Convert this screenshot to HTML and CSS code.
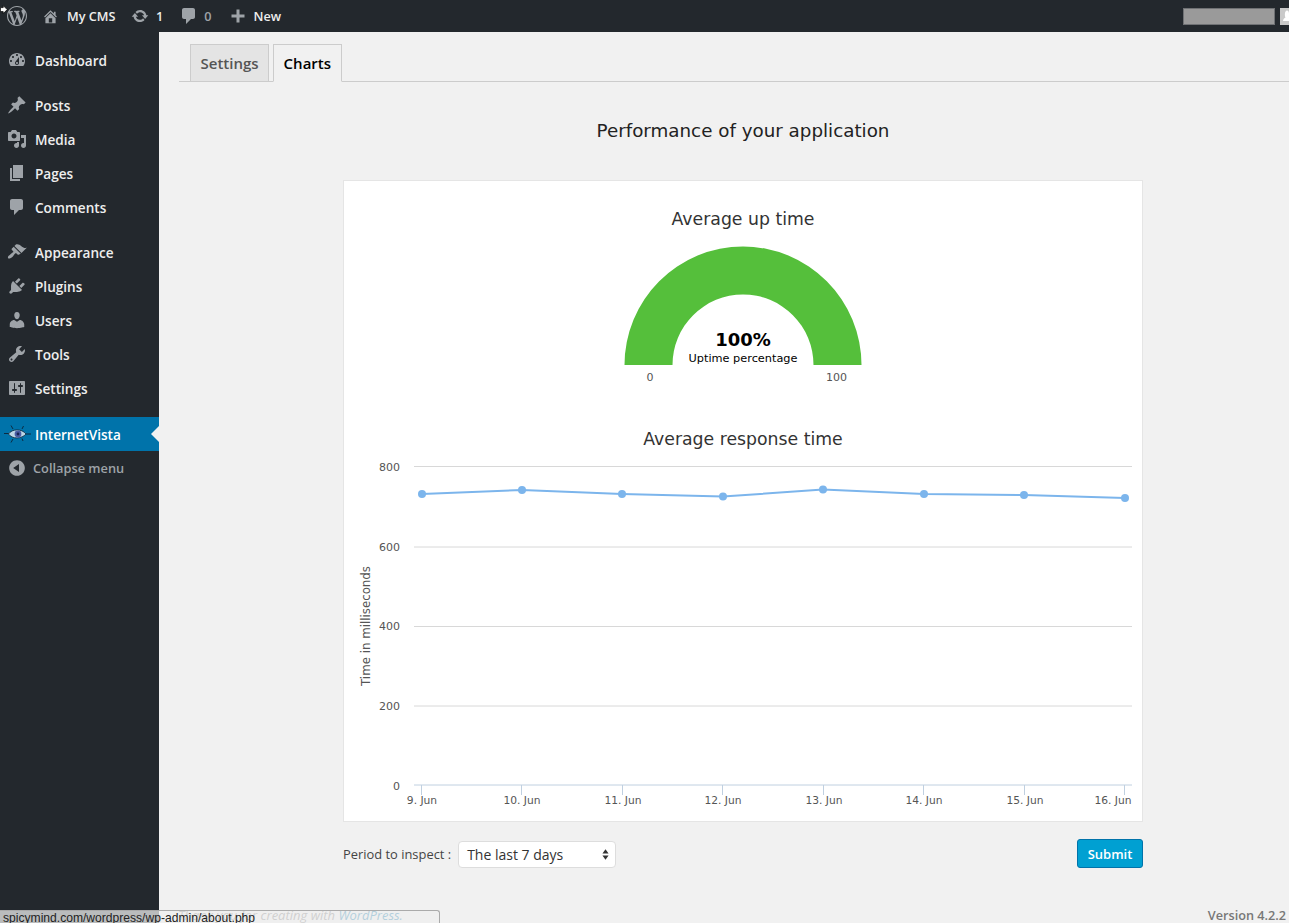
FILE: index.html
```html
<!DOCTYPE html>
<html lang="en">

<head>
    <meta charset="UTF-8">
    <meta name="viewport" content="width=device-width, initial-scale=1.0">
    <title>InternetVista ‹ My CMS</title>
    <link rel="stylesheet" href="styles.css">
</head>

<body>
    <header class="admin-bar">
        <svg class="bar-logo" viewBox="0 0 20 20"><path d="M20 10c0-5.51-4.49-10-10-10C4.48 0 0 4.49 0 10c0 5.52 4.48 10 10 10 5.51 0 10-4.48 10-10zM7.78 15.37L4.37 6.22c.55-.02 1.17-.08 1.17-.08.5-.06.44-1.13-.06-1.11 0 0-1.45.11-2.37.11-.18 0-.37 0-.58-.01C4.12 2.69 6.87 1.11 10 1.11c2.33 0 4.45.87 6.05 2.34-.68-.11-1.65.39-1.65 1.58 0 .74.45 1.36.9 2.1.35.61.55 1.36.55 2.46 0 1.49-1.4 5-1.4 5l-3.03-8.37c.54-.02.82-.17.82-.17.5-.05.44-1.25-.06-1.22 0 0-1.44.12-2.38.12-.87 0-2.33-.12-2.33-.12-.5-.03-.56 1.2-.06 1.22l.92.08 1.26 3.41zM17.41 10c.24-.64.74-1.87.43-4.25.7 1.29 1.05 2.71 1.05 4.25 0 3.29-1.73 6.24-4.4 7.78.97-2.59 1.94-5.2 2.92-7.78zM6.1 18.09C3.12 16.65 1.11 13.53 1.11 10c0-1.3.23-2.48.72-3.59C3.25 10.3 4.67 14.2 6.1 18.09zm4.03-6.63l2.58 6.98c-.86.29-1.76.45-2.71.45-.79 0-1.57-.11-2.29-.33.81-2.38 1.62-4.74 2.42-7.1z"/></svg>
        <a class="bar-item bar-home">
            <svg viewBox="0 0 20 20"><path d="M16 8.5l1.53 1.53-1.06 1.06L10 4.62l-6.47 6.47-1.06-1.06L10 2.5l4 4v-2h2v4zm-6-2.46l6 5.99V18H4v-5.97zM12 17v-5H8v5h4z"/></svg>
            My CMS
        </a>
        <a class="bar-item bar-updates">
            <svg viewBox="0 0 20 20"><path d="M10.2 3.28c3.53 0 6.43 2.61 6.92 6h2.08l-3.5 4-3.5-4h2.32c-.45-1.97-2.21-3.45-4.32-3.45-1.45 0-2.73.71-3.54 1.78L4.95 5.66C6.23 4.2 8.11 3.28 10.2 3.28zm-.4 13.44c-3.52 0-6.43-2.61-6.92-6H.8l3.5-4c1.17 1.33 2.33 2.67 3.5 4H5.48c.45 1.97 2.21 3.45 4.32 3.45 1.45 0 2.73-.71 3.54-1.78l1.71 1.95c-1.28 1.46-3.15 2.38-5.25 2.38z"/></svg>
            1
        </a>
        <a class="bar-item bar-comments">
            <svg viewBox="0 0 20 20"><path d="M5 2h9c1.1 0 2 .9 2 2v7c0 1.1-.9 2-2 2h-2l-5 5v-5H5c-1.1 0-2-.9-2-2V4c0-1.1.9-2 2-2z"/></svg>
            0
        </a>
        <a class="bar-item bar-new">
            <svg viewBox="0 0 20 20"><path d="M8.5 3.500h3v5h5v3h-5v5h-3v-5h-5v-3h5z"/></svg>
            New
        </a>
        <div class="bar-user">
            <span class="user-name"></span>
            <svg class="user-avatar" viewBox="0 0 9 17">
                <rect width="9" height="17" fill="#c9c9c9"/>
                <path d="M7 2.500c2 0 2 3 2 3v5c0 1.500 0 2.500 0 2.500H3c0-2 1.500-3 2.500-3.500C4.500 8 4.500 2.500 7 2.500z" fill="#fff"/>
            </svg>
        </div>
    </header>

    <div class="wrap">
        <nav class="side-menu">
            <ul class="menu-group">
                <li>
                    <svg viewBox="0 0 20 20"><path d="M3.76 16h12.48c1.1-1.37 1.76-3.11 1.76-5 0-4.42-3.58-8-8-8s-8 3.58-8 8c0 1.89.66 3.63 1.76 5zM10 4c.55 0 1 .45 1 1s-.45 1-1 1-1-.45-1-1 .45-1 1-1zM6 6c.55 0 1 .45 1 1s-.45 1-1 1-1-.45-1-1 .45-1 1-1zm8 0c.55 0 1 .45 1 1s-.45 1-1 1-1-.45-1-1 .45-1 1-1zm-5.37 5.55L12 7v6c0 1.1-.9 2-2 2s-2-.9-2-2c0-.57.24-1.08.63-1.45zM4 10c.55 0 1 .45 1 1s-.45 1-1 1-1-.45-1-1 .45-1 1-1zm12 0c.55 0 1 .45 1 1s-.45 1-1 1-1-.45-1-1 .45-1 1-1zm-5 3c0-.55-.45-1-1-1s-1 .45-1 1 .45 1 1 1 1-.45 1-1z" fill-rule="evenodd"/></svg>
                    Dashboard
                </li>
            </ul>
            <ul class="menu-group">
                <li>
                    <svg viewBox="0 0 20 20"><path d="M10.44 3.02l1.82-1.82 6.36 6.35-1.83 1.82c-1.05-.68-2.48-.57-3.41.36l-.75.75c-.92.93-1.04 2.35-.35 3.41l-1.83 1.82-2.41-2.41-2.8 2.79c-.42.42-3.38 2.71-3.8 2.29s1.86-3.39 2.28-3.81l2.79-2.79L4.1 9.36l1.83-1.82c1.05.69 2.48.57 3.4-.36l.75-.75c.93-.92 1.05-2.35.36-3.41z"/></svg>
                    Posts
                </li>
                <li>
                    <svg viewBox="0 0 20 20"><path d="M13 11V4c0-.55-.45-1-1-1h-1.67L9 1H5L3.67 3H2c-.55 0-1 .45-1 1v7c0 .55.45 1 1 1h10c.55 0 1-.45 1-1zM7 4.5c1.38 0 2.5 1.12 2.5 2.5S8.38 9.5 7 9.5 4.5 8.38 4.5 7 5.62 4.5 7 4.5zM14 6h5v10.5c0 1.38-1.12 2.5-2.5 2.5S14 17.88 14 16.5s1.12-2.5 2.5-2.5c.17 0 .34.02.5.05V9h-3V6zm-4 8.05V13h2v3.5c0 1.38-1.12 2.5-2.5 2.5S7 17.88 7 16.5 8.12 14 9.5 14c.17 0 .34.02.5.05z"/></svg>
                    Media
                </li>
                <li>
                    <svg viewBox="0 0 20 20"><path d="M6 15V2h10v13H6zm-1 1h8v2H3V5h2v11z"/></svg>
                    Pages
                </li>
                <li>
                    <svg viewBox="0 0 20 20"><path d="M5 2h9c1.1 0 2 .9 2 2v7c0 1.1-.9 2-2 2h-2l-5 5v-5H5c-1.1 0-2-.9-2-2V4c0-1.1.9-2 2-2z"/></svg>
                    Comments
                </li>
            </ul>
            <ul class="menu-group">
                <li>
                    <svg viewBox="0 0 20 20"><path d="M14.48 11.06L7.41 3.99l1.5-1.5c.5-.56 2.3-.47 3.51.32 1.21.8 1.43 1.28 2.91 2.1 1.18.64 2.45 1.26 4.45.85zm-.71.71L6.7 4.7 4.93 6.47c-.39.39-.39 1.02 0 1.41l1.06 1.06c.39.39.39 1.03 0 1.42-.6.6-1.43 1.11-2.21 1.69-.35.26-.7.53-1.01.84C1.43 13.23.4 15.5 1.19 16.28c.79.79 3.05-.25 4.39-1.58.31-.31.58-.66.84-1.01.58-.78 1.09-1.61 1.69-2.21.39-.39 1.02-.39 1.41 0l1.06 1.06c.39.39 1.02.39 1.41 0z"/></svg>
                    Appearance
                </li>
                <li>
                    <svg viewBox="0 0 20 20"><path d="M13.11 4.36L9.87 7.6 8 5.73l3.24-3.24c.35-.34 1.05-.2 1.56.32.52.51.66 1.21.31 1.55zm-8 1.77l.91-1.12 9.01 9.01-1.19.84c-.71.71-2.63 1.16-3.82 1.16H6.14L4.9 17.26c-.59.59-1.54.59-2.12 0-.59-.58-.59-1.53 0-2.12l1.24-1.24v-3.88c0-1.13.4-3.19 1.09-3.89zm7.26 3.97l3.24-3.24c.34-.35 1.04-.21 1.55.31.52.51.66 1.21.31 1.55l-3.24 3.25z"/></svg>
                    Plugins
                </li>
                <li>
                    <svg viewBox="0 0 20 20"><path d="M10 9.25c-2.27 0-2.73-3.44-2.73-3.44C7 4.02 7.82 2 9.97 2c2.16 0 2.98 2.02 2.71 3.81 0 0-.41 3.44-2.68 3.44zm0 2.57L12.72 10c2.39 0 4.52 2.33 4.52 4.53v2.49s-3.65 1.13-7.24 1.13c-3.65 0-7.24-1.13-7.24-1.13v-2.49c0-2.25 1.94-4.48 4.47-4.48z"/></svg>
                    Users
                </li>
                <li>
                    <svg viewBox="0 0 20 20"><path d="M16.68 9.77c-1.34 1.34-3.3 1.67-4.95.99l-5.41 6.52c-.99.99-2.59.99-3.58 0s-.99-2.59 0-3.57l6.52-5.42c-.68-1.65-.35-3.61.99-4.95 1.28-1.28 3.12-1.62 4.72-1.06l-2.89 2.89 2.82 2.82 2.86-2.87c.53 1.58.18 3.39-1.08 4.65zM3.81 16.21c.4.39 1.04.39 1.43 0 .4-.4.4-1.04 0-1.43-.39-.4-1.03-.4-1.43 0-.39.39-.39 1.03 0 1.43z"/></svg>
                    Tools
                </li>
                <li>
                    <svg viewBox="0 0 20 20"><path d="M18 16V4c0-.55-.45-1-1-1H3c-.55 0-1 .45-1 1v12c0 .55.45 1 1 1h14c.55 0 1-.45 1-1zM8 11h1c.55 0 1 .45 1 1s-.45 1-1 1H8v1.5c0 .28-.22.5-.5.5s-.5-.22-.5-.5V13H6c-.55 0-1-.45-1-1s.45-1 1-1h1V5.5c0-.28.22-.5.5-.5s.5.22.5.5V11zm5-2h-1c-.55 0-1-.45-1-1s.45-1 1-1h1V5.5c0-.28.22-.5.5-.5s.5.22.5.5V7h1c.55 0 1 .45 1 1s-.45 1-1 1h-1v5.5c0 .28-.22.5-.5.5s-.5-.22-.5-.5V9z"/></svg>
                    Settings
                </li>
            </ul>
            <ul class="menu-group">
                <li class="current">
                    <svg class="eye-icon" viewBox="0 0 28 20">
                        <path d="M1 9.500h5M23 10h5M10 5L8 1.500M19 5L20.500 2M10 15L8 18.500M19 14.500L20 17" fill="none" stroke="#0e2236" stroke-width=".9"/>
                        <path d="M5.500 10C9 4.500 19 4.500 23 10C19 15 9 15.500 5.500 10z" fill="#bcd6e6" stroke="#12324a" stroke-width=".9"/>
                        <circle cx="15" cy="10" r="3.400" fill="#4c5da3"/>
                        <circle cx="15" cy="10" r="1.400" fill="#1a2452"/>
                    </svg>
                    InternetVista
                </li>
                <li class="collapse">
                    <svg viewBox="0 0 20 20"><path d="M10 2.160c4.330 0 7.840 3.510 7.840 7.840s-3.510 7.840-7.840 7.840S2.160 14.330 2.160 10 5.710 2.160 10 2.160zm2 11.720V6.120L6.180 9.970z"/></svg>
                    Collapse menu
                </li>
            </ul>
        </nav>

        <main class="content">
            <div class="tabs">
                <a class="tab">Settings</a>
                <a class="tab tab-active">Charts</a>
            </div>

            <h1 class="page-title">Performance of your application</h1>

            <section class="chart-box">
                <!-- viewBox uses page coordinates so the chart can be read against the layout -->
                <svg class="charts" viewBox="344 181 798 640">
                    <text class="chart-title" x="743" y="225">Average up time</text>
                    <path d="M624.500 365A118.500 118.500 0 0 1 861.500 365H813.500A70.500 70.500 0 0 0 672.500 365z" fill="#55bf3b"/>
                    <text class="gauge-value" x="743" y="345.500">100%</text>
                    <text class="gauge-label" x="743" y="361.500">Uptime percentage</text>
                    <text class="axis-label" x="650" y="381">0</text>
                    <text class="axis-label" x="836.500" y="381">100</text>

                    <text class="chart-title" x="743" y="445">Average response time</text>
                    <g class="grid">
                        <line x1="414" x2="1132" y1="466.500" y2="466.500"/>
                        <line x1="414" x2="1132" y1="547" y2="547"/>
                        <line x1="414" x2="1132" y1="626.500" y2="626.500"/>
                        <line x1="414" x2="1132" y1="706" y2="706"/>
                    </g>
                    <g class="axis-line">
                        <line x1="414" x2="1132" y1="785" y2="785"/>
                        <line x1="421.500" x2="421.500" y1="785" y2="795"/>
                        <line x1="521.500" x2="521.500" y1="785" y2="795"/>
                        <line x1="622.500" x2="622.500" y1="785" y2="795"/>
                        <line x1="722.500" x2="722.500" y1="785" y2="795"/>
                        <line x1="823.500" x2="823.500" y1="785" y2="795"/>
                        <line x1="923.500" x2="923.500" y1="785" y2="795"/>
                        <line x1="1024.500" x2="1024.500" y1="785" y2="795"/>
                        <line x1="1124.500" x2="1124.500" y1="785" y2="795"/>
                    </g>
                    <g class="y-labels">
                        <text x="400" y="471">800</text>
                        <text x="400" y="551">600</text>
                        <text x="400" y="630">400</text>
                        <text x="400" y="710">200</text>
                        <text x="400" y="790">0</text>
                    </g>
                    <g class="x-labels">
                        <text x="422" y="804">9. Jun</text>
                        <text x="522" y="804">10. Jun</text>
                        <text x="623" y="804">11. Jun</text>
                        <text x="723" y="804">12. Jun</text>
                        <text x="824" y="804">13. Jun</text>
                        <text x="924" y="804">14. Jun</text>
                        <text x="1025" y="804">15. Jun</text>
                        <text x="1113" y="804">16. Jun</text>
                    </g>
                    <text class="y-title" transform="translate(370 626) rotate(-90)">Time in milliseconds</text>
                    <polyline class="series" points="422,494 522,490 622,494 723,496.500 823,489.500 924,494 1024,495 1125,498"/>
                    <g class="points">
                        <circle cx="422" cy="494" r="4"/>
                        <circle cx="522" cy="490" r="4"/>
                        <circle cx="622" cy="494" r="4"/>
                        <circle cx="723" cy="496.500" r="4"/>
                        <circle cx="823" cy="489.500" r="4"/>
                        <circle cx="924" cy="494" r="4"/>
                        <circle cx="1024" cy="495" r="4"/>
                        <circle cx="1125" cy="498" r="4"/>
                    </g>
                </svg>
            </section>

            <div class="period-row">
                <label class="period-label">Period to inspect :</label>
                <div class="period-select">
                    The last 7 days
                    <svg viewBox="0 0 8 12"><path d="M4 0L7.500 4.800H.5zM4 12L.5 7.200H7.500z"/></svg>
                </div>
                <button class="submit-btn">Submit</button>
            </div>

            <footer class="page-footer">
                <span class="thanks">Thank you for creating with <a>WordPress.</a></span>
                <span class="version">Version 4.2.2</span>
            </footer>
        </main>
    </div>

    <div class="status-url">spicymind.com/wordpress/wp-admin/about.php</div>
    <svg class="cursor" viewBox="0 0 10 12"><path d="M4 .5L9 5.500 4 10.500V8H.5V3H4z"/></svg>
</body>

</html>
```

FILE: styles.css
```css
* {
    margin: 0;
    padding: 0;
    box-sizing: border-box;
}

html,
body {
    height: 100%;
    overflow: hidden;
}

body {
    display: flex;
    flex-direction: column;
    background-color: #f1f1f1;
    color: #444;
    font-family: "Open Sans", "Liberation Sans", sans-serif;
    font-size: 13px;
}

ul {
    list-style: none;
}

/* top bar */
.admin-bar {
    display: flex;
    align-items: center;
    flex: none;
    height: 32px;
    padding-left: 7px;
    background-color: #23282d;
    color: #eee;
    font-size: 12.700px;
    font-weight: 600;
}

.admin-bar svg {
    width: 20px;
    height: 20px;
    fill: #9ea3a8;
}

.admin-bar .bar-logo {
    width: 20px;
    margin-right: 15px;
}

.bar-item {
    display: flex;
    align-items: center;
    gap: 6px;
    margin-right: 16px;
}

.bar-home {
    gap: 8px;
    margin-right: 15.500px;
}

.admin-bar .bar-home svg {
    width: 17px;
    height: 17px;
}

.admin-bar .bar-updates svg {
    width: 18px;
    height: 18px;
}

.bar-updates {
    gap: 7px;
}

.bar-comments {
    gap: 5px;
    color: #9ea3a8;
}

.bar-user {
    display: flex;
    gap: 5px;
    margin-left: auto;
}

.user-name {
    width: 92px;
    height: 17px;
    background-color: #9a9a9a;
    border: 1px solid #6f7174;
}

.admin-bar .user-avatar {
    width: 9px;
    height: 17px;
}

/* side menu */
.wrap {
    display: flex;
    flex: 1;
    min-height: 0;
}

.side-menu {
    flex: none;
    width: 159px;
    padding-top: 11px;
    background-color: #23282d;
    color: #eee;
    font-size: 13.600px;
    font-weight: 600;
}

.menu-group {
    margin-bottom: 11px;
}

.menu-group:nth-child(3) {
    margin-bottom: 12px;
}

.menu-group li {
    display: flex;
    align-items: center;
    position: relative;
    height: 34px;
    padding-left: 7px;
}

.menu-group li svg {
    flex: none;
    width: 20px;
    height: 20px;
    margin-right: 8px;
    fill: #9ea3a8;
}

.menu-group li.current {
    background-color: #0073aa;
    color: #fff;
}

.menu-group li.current::after {
    content: "";
    position: absolute;
    right: 0;
    top: 9px;
    border: 8px solid transparent;
    border-right-color: #f1f1f1;
    border-left-width: 0;
}

.menu-group li .eye-icon {
    width: 28px;
    margin-left: -4px;
    margin-right: 4px;
}

.menu-group li.collapse {
    color: #9ea3a8;
    font-size: 12.800px;
}

.menu-group li.collapse svg {
    margin-right: 6px;
}

/* main area */
.content {
    display: flex;
    flex-direction: column;
    flex: 1;
    min-width: 0;
    padding-left: 20px;
}

.tabs {
    display: flex;
    gap: 4px;
    flex: none;
    height: 50px;
    padding: 12px 0 0 11px;
    border-bottom: 1px solid #ccc;
}

.tab {
    height: 38px;
    padding: 0 9.500px;
    background-color: #e4e4e4;
    border: 1px solid #ccc;
    color: #555;
    font-size: 15px;
    font-weight: 600;
    line-height: 36px;
}

.tab-active {
    background-color: #f1f1f1;
    border-bottom-color: #f1f1f1;
    color: #000;
}

.page-title {
    width: 800px;
    margin: 35px 0 0 164px;
    color: #222;
    font-family: "DejaVu Sans", sans-serif;
    font-size: 18.300px;
    font-weight: 400;
    line-height: 28px;
    text-align: center;
}

.chart-box {
    flex: none;
    width: 800px;
    height: 642px;
    margin: 35px 0 0 164px;
    background-color: #fff;
    border: 1px solid #e5e5e5;
}

.charts {
    display: block;
    width: 798px;
    height: 640px;
    font-family: "DejaVu Sans", sans-serif;
}

.chart-title {
    fill: #333;
    font-size: 17.300px;
    text-anchor: middle;
}

.gauge-value {
    fill: #000;
    font-size: 18px;
    font-weight: 700;
    text-anchor: middle;
}

.gauge-label {
    fill: #000;
    font-size: 11.300px;
    text-anchor: middle;
}

.axis-label {
    fill: #555;
    font-size: 11px;
    text-anchor: middle;
}

.x-labels text {
    fill: #555;
    font-size: 10.700px;
    text-anchor: middle;
}

.y-labels text {
    fill: #555;
    font-size: 11px;
    text-anchor: end;
}

.y-title {
    fill: #555;
    font-size: 11.800px;
    text-anchor: middle;
}

.grid line {
    stroke: #d8d8d8;
    stroke-width: 1;
}

.axis-line line {
    stroke: #c0d0e0;
    stroke-width: 1;
}

.series {
    fill: none;
    stroke: #7cb5ec;
    stroke-width: 2;
}

.points circle {
    fill: #7cb5ec;
}

.period-row {
    display: flex;
    align-items: center;
    flex: none;
    width: 800px;
    height: 30px;
    margin: 17px 0 0 164px;
}

.period-label {
    margin-right: 7px;
    color: #444;
    font-size: 12.900px;
}

.period-select {
    display: flex;
    align-items: center;
    justify-content: space-between;
    width: 158px;
    height: 27px;
    padding: 0 6px 0 8px;
    background-color: #fff;
    border: 1px solid #ddd;
    border-radius: 4px;
    color: #333;
    font-size: 14px;
}

.period-select svg {
    width: 7px;
    height: 11px;
    fill: #333;
}

.submit-btn {
    width: 66px;
    height: 29px;
    margin-left: auto;
    margin-bottom: 1px;
    background-color: #00a0d2;
    border: 1px solid #0073aa;
    border-radius: 3px;
    color: #fff;
    font-family: inherit;
    font-size: 13px;
    font-weight: 600;
}

.page-footer {
    display: flex;
    justify-content: space-between;
    height: 17px;
    margin-top: auto;
    margin-left: -1px;
    padding-right: 3px;
    color: #777;
}

.thanks {
    color: #777;
    font-style: italic;
}

.thanks a {
    color: #0073aa;
}

.version {
    font-size: 12.700px;
    font-weight: 600;
}

/* browser status url + mouse pointer, both lie over the page */
.status-url {
    position: absolute;
    left: 0;
    bottom: 0;
    width: 440px;
    height: 13px;
    overflow: hidden;
    padding-left: 3px;
    background-color: rgba(238, 238, 238, .75);
    border: 1px solid #aaa;
    border-width: 1px 1px 0 0;
    border-top-right-radius: 3px;
    color: #222;
    font-family: "Liberation Sans", sans-serif;
    font-size: 12.100px;
    line-height: 15px;
    white-space: nowrap;
}

.cursor {
    position: absolute;
    left: 0;
    top: 5px;
    width: 8px;
    height: 10px;
    fill: #fff;
    stroke: #000;
    stroke-width: .9;
}
```
